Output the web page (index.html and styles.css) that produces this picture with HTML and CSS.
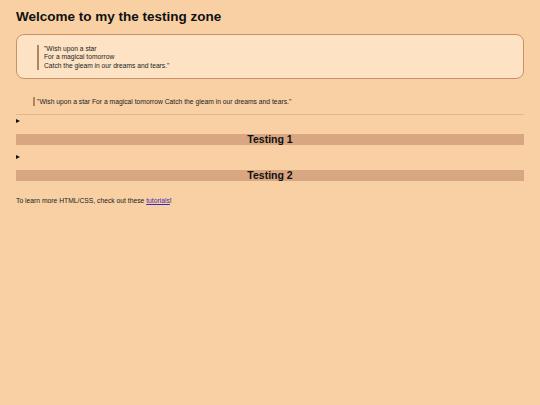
FILE: index.html
```html
<!DOCTYPE html>
<html>
<head>
<meta charset="utf-8">
<link rel="stylesheet" href="styles.css">
</head>
<body>
<h1 class="title">Welcome to my the testing zone</h1>
<div class="card">
  <blockquote class="quote">"Wish upon a star<br>For a magical tomorrow<br>Catch the gleam in our dreams and tears."</blockquote>
</div>
<blockquote class="quote-inline">"Wish upon a star For a magical tomorrow Catch the gleam in our dreams and tears."</blockquote>
<hr class="rule">
<div class="toggle"><span class="arrow"></span></div>
<h2 class="bar">Testing 1</h2>
<div class="toggle"><span class="arrow"></span></div>
<h2 class="bar">Testing 2</h2>
<p class="note">To learn more HTML/CSS, check out these <a href="#" class="link">tutorials</a>!</p>
</body>
</html>
```
FILE: styles.css
```css
html, body {
  margin: 0;
  padding: 0;
  background: #f8d0a4;
}
body {
  font-family: "Liberation Sans", Arial, sans-serif;
  color: #111;
  padding: 0 16px;
}
.title {
  margin: 0;
  padding-top: 8px;
  font-size: 13.5px;
  line-height: 17px;
  font-weight: bold;
}
.card {
  margin-top: 9px;
  height: 43px;
  border: 1px solid #c9916a;
  border-radius: 8px;
  background: #fde3c4;
  display: flex;
  align-items: center;
  padding-left: 20px;
}
.quote {
  margin: 2px 0 0 0;
  border-left: 2px solid #b5835e;
  padding-left: 5px;
  font-size: 6.7px;
  line-height: 8.5px;
  color: #222;
}
.quote-inline {
  margin: 18px 0 0 17px;
  border-left: 2px solid #b5835e;
  padding-left: 2px;
  font-size: 6.75px;
  line-height: 9px;
  color: #222;
}
.rule {
  margin: 8px 0 0 0;
  border: 0;
  border-top: 1px solid #e3b890;
  height: 0;
}
.toggle {
  height: 12px;
  display: flex;
  align-items: center;
}
.arrow {
  width: 0;
  height: 0;
  border-top: 2.5px solid transparent;
  border-bottom: 2.5px solid transparent;
  border-left: 4px solid #111;
}
.bar {
  margin: 7px 0 6px 0;
  background: #d8a680;
  text-align: center;
  font-size: 10.5px;
  line-height: 11px;
  font-weight: bold;
}
.note {
  margin: 16px 0 0 0;
  font-size: 6.75px;
  line-height: 8px;
  color: #222;
}
.link {
  color: #3a2bb5;
}
```
